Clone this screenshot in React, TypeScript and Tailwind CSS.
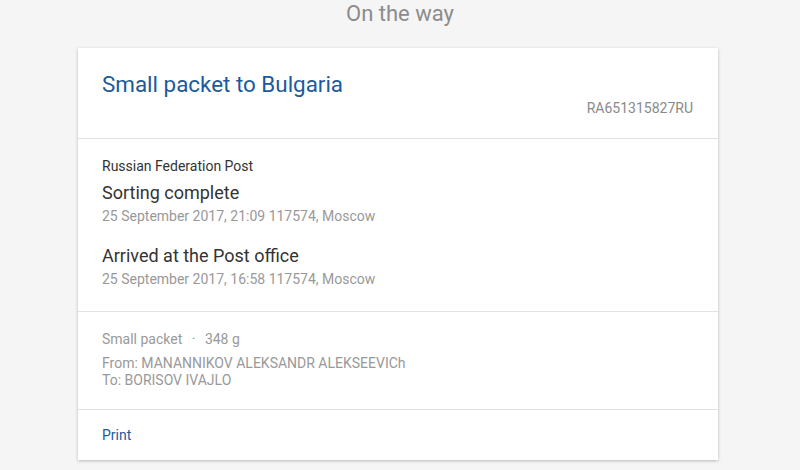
import React from "react";

const events = [
  { title: "Sorting complete", meta: "25 September 2017, 21:09 117574, Moscow" },
  { title: "Arrived at the Post office", meta: "25 September 2017, 16:58 117574, Moscow" },
];

export default function App() {
  return (
    <div
      className="min-h-[470px] w-[800px] bg-[#f5f5f5] font-['Roboto',sans-serif]"
    >
      {/* Status */}
      <div className="pt-[1px] text-center text-[22px] leading-[26px] text-[#8c8c8c]">
        On the way
      </div>

      {/* Card */}
      <div className="ml-[78px] mt-[21px] w-[640px] bg-white shadow-[0_1px_3px_rgba(0,0,0,0.25)]">
        <div className="px-6 pt-[23px] pb-[22px] border-b border-[#e3e3e3]">
          <h1 className="text-[22.4px] leading-[26px] text-[#1b5a9c]">
            Small packet to Bulgaria
          </h1>
          <div className="mt-[3px] text-right pr-[1px] text-[14px] leading-4 text-[#8a8a8a]">
            RA651315827RU
          </div>
        </div>

        <div className="px-6 pt-[19px] pb-[24px] border-b border-[#e3e3e3]">
          <div className="text-[14px] leading-4 text-[#333]">
            Russian Federation Post
          </div>
          <div className="mt-2 flex flex-col gap-[21px]">
            {events.map((ev, i) => (
              <div key={i}>
                <div className="text-[18px] leading-[22px] text-[#333]">
                  {ev.title}
                </div>
                <div className="mt-1 text-[14px] leading-4 text-[#999]">
                  {ev.meta}
                </div>
              </div>
            ))}
          </div>
        </div>

        <div className="px-6 pt-[19px] pb-[20px] border-b border-[#e3e3e3] text-[14px] text-[#999]">
          <div className="leading-4">
            Small packet <span className="mx-[6px]">·</span> 348 g
          </div>
          <div className="mt-2 leading-[17px]">
            <div>From: MANANNIKOV ALEKSANDR ALEKSEEVICh</div>
            <div>To: BORISOV IVAJLO</div>
          </div>
        </div>

        <div className="px-6 pt-[17px] pb-[17px] text-[14px] leading-4">
          <span className="text-[#1b5a9c]">Print</span>
        </div>
      </div>
    </div>
  );
}
